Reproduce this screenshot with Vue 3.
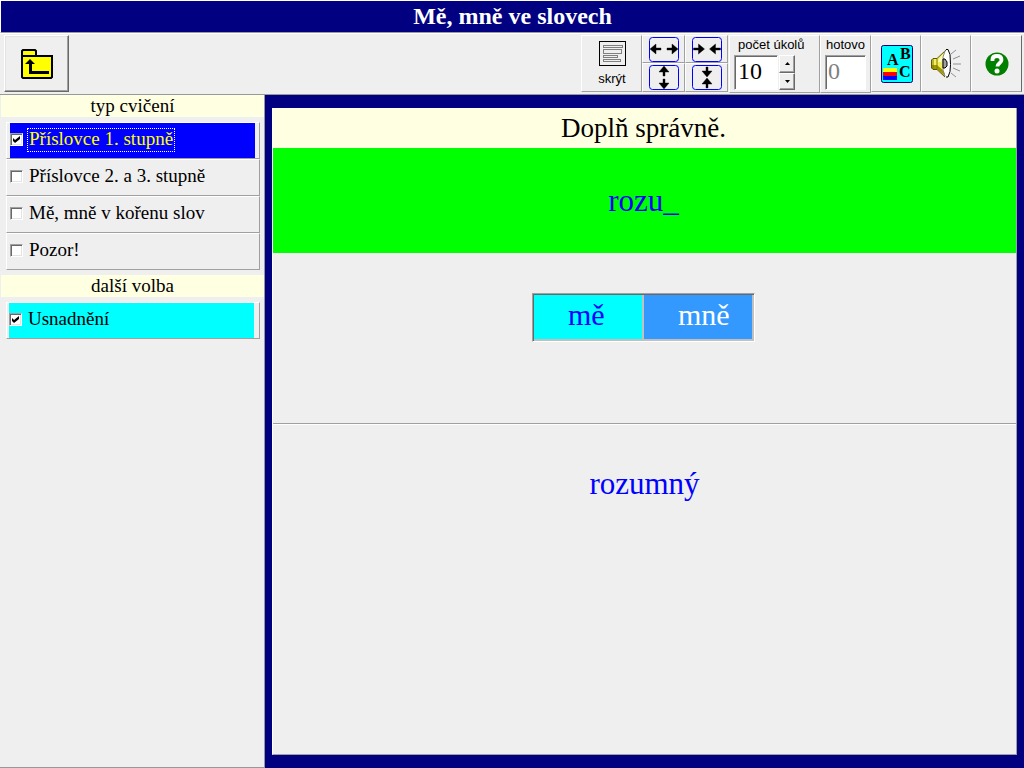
<script setup>
import { ref } from 'vue'

const exercises = ref([
  { label: 'Příslovce 1. stupně', checked: true },
  { label: 'Příslovce 2. a 3. stupně', checked: false },
  { label: 'Mě, mně v kořenu slov', checked: false },
  { label: 'Pozor!', checked: false }
])
const easier = ref(true)
const count = ref(10)
const done = ref(0)
const answers = ['mě', 'mně']
const arrows = [
  { name: 'Rozšířit', d: 'M1 12l6-5v4h5v2H7v4zM29 12l-6-5v4h-5v2h5v4z' },
  { name: 'Zúžit', d: 'M12.500 12l-6-5v4h-5v2h5v4zM17.500 12l6-5v4h5v2h-5v4z' },
  { name: 'Zvýšit', d: 'M15 1l5 6h-4v4h-2V7h-4zM15 24l5-6h-4v-4h-2v4h-4z' },
  { name: 'Snížit', d: 'M15 12l5-6h-4V2h-2v4h-4zM15 13l5 6h-4v4h-2v-4h-4z' }
]
</script>

<template>
  <div class="app">
    <h1 class="title">Mě, mně ve slovech</h1>
    <header class="toolbar">
      <button class="raised folder" aria-label="Zpět">
        <svg width="32" height="30" viewBox="0 0 32 30">
          <path d="M1 28V2l1-1h12l1 1v5h16v21l-1 1H2z" fill="#ff0" stroke="#000" stroke-width="2" />
          <path d="M1 7h15" stroke="#000" stroke-width="2" />
          <path d="M9 10l5 5h-3v7h17v3H8v-10H4z" />
        </svg>
      </button>
      <div class="tools">
        <button class="cell hide">
          <svg width="27" height="25" viewBox="0 0 27 25" fill="none" shape-rendering="crispEdges">
            <path d="M.5.5h26v24H.5z" stroke="#000" />
            <path d="M4.500 4.500h19v2h-19zM4.500 8.500h18v4h-18zM4.500 14.500h14v2h-14zM4.500 18.500h17v2h-17z" stroke="#808080" />
          </svg>
          <span>skrýt</span>
        </button>
        <div class="sizes">
          <button v-for="a in arrows" :key="a.name" class="cell" :aria-label="a.name">
            <svg width="30" height="25" viewBox="0 0 30 25">
              <rect x=".5" y=".5" width="29" height="24" rx="3" fill="none" stroke="#00f" />
              <path :d="a.d" stroke="#000" stroke-width=".4" />
            </svg>
          </button>
        </div>
        <div class="cell field count">
          <label for="count">počet úkolů</label>
          <div class="spinner">
            <input id="count" v-model="count" type="text">
            <div class="steps">
              <button aria-label="Více" @click="count++"><svg width="5" height="3"><path d="M0 3h5L2.500 0z" /></svg></button>
              <button aria-label="Méně" @click="count--"><svg width="5" height="3"><path d="M0 0h5L2.500 3z" /></svg></button>
            </div>
          </div>
        </div>
        <div class="cell field done">
          <label for="done">hotovo</label>
          <input id="done" :value="done" type="text" readonly>
        </div>
        <button class="cell square" aria-label="Písmo">
          <svg width="32" height="38" viewBox="0 0 32 38">
            <rect x=".5" y=".5" width="31" height="37" rx="2" fill="#0ff" stroke="#000080" />
            <g font-family="Liberation Serif, serif" font-weight="bold" font-size="16">
              <text x="6" y="20">A</text>
              <text x="19" y="14">B</text>
              <text x="18" y="32">C</text>
            </g>
            <path d="M2 23h14v4H2z" fill="#ff0" />
            <path d="M2 27h14v4H2z" fill="red" />
            <path d="M2 31h14v4H2z" fill="#00f" />
          </svg>
        </button>
        <button class="cell square" aria-label="Zvuk">
          <svg width="32" height="30" viewBox="0 0 32 30">
            <path d="M1 10h5L15 1v27L6 20H1z" fill="#f4ee60" />
            <path d="M1 16h5l8 7v4l-8-7H1z" fill="#a09800" />
            <path d="M8 10l5-5v4l-3 4H7z" fill="#ffffc0" />
            <path d="M15 1h2l2 4 1 10-1 8-2 5h-2l-3-7V8z" fill="#fff" />
            <path d="M2 10v10M6 10v10" fill="none" stroke="#807800" />
            <path d="M6 9.500H2L.5 11v8L2 20.500h4l8 7.500M6 9.500L15 1" fill="none" stroke="#605800" />
            <path d="M14 2l-2 6v13l2 6" fill="none" stroke="#888" />
            <path d="M15 .5h2l2 5 .5 10-.5 7-2 5.500h-2" fill="none" stroke="#000" />
            <path d="M12 10h2l2 3v4l-2 2h-2z" fill="#a0a0a0" stroke="#000" />
            <path d="M20 5l5-4M22 10l7-3M22 15h8M22 19l7 3M20 24l5 4" fill="none" stroke="#909090" />
          </svg>
        </button>
        <button class="cell square help" aria-label="Nápověda">
          <svg width="24" height="24" viewBox="0 0 24 24">
            <circle cx="12" cy="12" r="11.500" fill="#008000" />
            <path d="M7.500 9V7.500C7.500 5 9 4 12 4s4.500 1.500 4.500 4c0 3-4 3-4 6.500" fill="none" stroke="#fff" stroke-width="3.800" />
            <circle cx="12" cy="19" r="2.500" fill="#fff" />
          </svg>
        </button>
      </div>
    </header>
    <div class="body">
      <aside class="side">
        <h2>typ cvičení</h2>
        <div class="list">
          <div v-for="(e, i) in exercises" :key="e.label" class="option">
            <label :class="{ selected: i === 0 }">
              <input v-model="e.checked" type="checkbox"><span>{{ e.label }}</span>
            </label>
          </div>
        </div>
        <h2>další volba</h2>
        <div class="list">
          <div class="option extra">
            <label><input v-model="easier" type="checkbox"><span>Usnadnění</span></label>
          </div>
        </div>
      </aside>
      <main class="stage">
        <div class="panel">
          <h2 class="task">Doplň správně.</h2>
          <p class="question">rozu_</p>
          <div class="choice-area">
            <div class="choices">
              <button v-for="a in answers" :key="a">{{ a }}</button>
            </div>
          </div>
          <p class="result">rozumný</p>
        </div>
      </main>
    </div>
  </div>
</template>

<style>
body { margin: 0; background: #efefef; }
</style>

<style scoped>
.app {
  min-height: 100vh;
  display: flex;
  flex-direction: column;
  box-sizing: border-box;
  background: #efefef;
  color: #000;
  font-family: "Liberation Serif", "Times New Roman", serif;
}
.app * { box-sizing: border-box; }
h1, h2, p { margin: 0; font-weight: normal; }
button { padding: 0; margin: 0; background: #efefef; color: inherit; font: inherit; border-radius: 0; }
svg { display: block; }
.title {
  height: 33px;
  border-top: 1px solid #fff;
  border-left: 1px solid #fff;
  border-bottom: 1px solid #999;
  background: #000080;
  color: #fff;
  font-size: 24px;
  font-weight: bold;
  line-height: 30px;
  text-align: center;
}
.toolbar {
  height: 62px;
  display: flex;
  justify-content: space-between;
  padding: 1px 2px 2px 4px;
  border-top: 1px solid #fff;
  border-bottom: 1px solid #999;
}
.raised {
  border: 1px solid;
  border-color: #fff #696969 #696969 #fff;
  box-shadow: inset -1px -1px #a0a0a0, inset 1px 1px #e3e3e3;
}
.folder { width: 65px; height: 57px; display: grid; place-items: center; }
.tools { display: flex; height: 58px; font-family: "Liberation Sans", Arial, sans-serif; font-size: 13px; }
.cell {
  border: 1px solid;
  border-color: #fff #a0a0a0 #a0a0a0 #fff;
}
.hide {
  width: 61px;
  height: 57px;
  display: flex;
  flex-direction: column;
  align-items: center;
  padding: 5px 0 0 1px;
  gap: 5px;
  line-height: 16px;
}
.sizes { display: grid; grid-template-columns: 43px 43px; grid-template-rows: 28px 29px; }
.sizes .cell { display: grid; place-items: center; }
.field { display: flex; flex-direction: column; line-height: 16px; gap: 2px; padding-top: 1px; }
.count { width: 91px; padding-left: 4px; margin-left: 1px; }
.count label { padding-left: 4px; white-space: nowrap; }
.done { width: 51px; align-items: center; }
.field input {
  width: 44px;
  height: 35px;
  padding: 0 3px 2px;
  border: 1px solid;
  border-color: #a0a0a0 #fff #fff #a0a0a0;
  box-shadow: inset 1px 1px #696969;
  border-radius: 0;
  background: #fff;
  font: 24px "Liberation Serif", "Times New Roman", serif;
}
.field input:focus { outline: none; }
.done input { width: 41px; padding-left: 2px; color: #808080; }
.spinner { display: flex; gap: 1px; }
.steps { width: 16px; height: 35px; display: grid; grid-template-rows: 1fr 1fr; }
.steps button {
  display: grid;
  place-items: center;
  border: 1px solid;
  border-color: #fff #696969 #696969 #fff;
  box-shadow: inset -1px -1px #a0a0a0;
}
.square { width: 50px; height: 57px; padding-left: 2px; display: grid; place-items: center; }
.help { width: 51px; padding-left: 0; border-right-color: #696969; }
.body { flex: 1; display: flex; }
.side { width: 265px; flex-shrink: 0; padding-left: 1px; border-right: 1px solid #999; border-bottom: 1px solid #999; }
.side h2 { height: 22px; background: #ffffe1; font-size: 19px; line-height: 22px; text-align: center; }
.list { margin: 5px 4px 5px 5px; }
.option {
  height: 37px;
  padding: 0 4px 0 3px;
  border: 1px solid;
  border-color: #fff #a0a0a0 #a0a0a0 #fff;
}
.option label { height: 35px; display: flex; align-items: center; padding-bottom: 2px; font-size: 19px; line-height: 20px; }
.option span { margin-left: 5px; padding: 0 1px 2px; }
.option .selected { background: #00f; color: #ff0; }
.selected span { outline: 1px dotted #fff; }
.extra { padding: 0 5px 0 2px; }
.extra label { background: #0ff; }
.option input {
  appearance: none;
  width: 13px;
  height: 13px;
  margin: 0;
  flex-shrink: 0;
  background: #fff;
  border: 1px solid;
  border-color: #a0a0a0 #fff #fff #a0a0a0;
  box-shadow: inset 1px 1px #696969, inset -1px -1px #e3e3e3;
  display: grid;
  place-items: center;
}
.option input:checked::after {
  content: "";
  width: 7px;
  height: 7px;
  background: #000;
  clip-path: polygon(0 29%, 29% 57%, 100% 0, 100% 43%, 29% 100%, 0 71%);
}
.stage { flex: 1; display: flex; background: #000080; padding: 13px 7px; }
.panel {
  flex: 1;
  display: flex;
  flex-direction: column;
  background: #efefef;
  border-left: 1px solid #fff;
  border-right: 1px solid #a0a0a0;
  border-bottom: 1px solid #a0a0a0;
  text-align: center;
}
.panel > * { padding-right: 2px; }
.task { background: #ffffe1; font-size: 27px; line-height: 40px; }
.question { height: 105px; background: #0f0; color: #00f; font-size: 31px; line-height: 105px; }
.choice-area { height: 171px; padding-top: 40px; border-bottom: 1px solid #a0a0a0; display: flex; justify-content: center; align-items: flex-start; }
.choices {
  display: flex;
  gap: 2px;
  padding: 1px 2px 2px 1px;
  background: #c0c0c0;
  border: 1px solid;
  border-color: #a0a0a0 #fff #fff #a0a0a0;
  box-shadow: inset 1px 1px #696969;
}
.choices button { width: 108px; height: 44px; padding: 0 0 4px 34px; border: 0; text-align: left; font-size: 30px; line-height: 40px; background: #0ff; color: #00f; }
.choices button:last-child { background: #39f; color: #fff; }
.result { flex: 1; border-top: 1px solid #fff; padding: 42px 0 0; font-size: 31px; line-height: 34px; color: #00f; }
</style>
